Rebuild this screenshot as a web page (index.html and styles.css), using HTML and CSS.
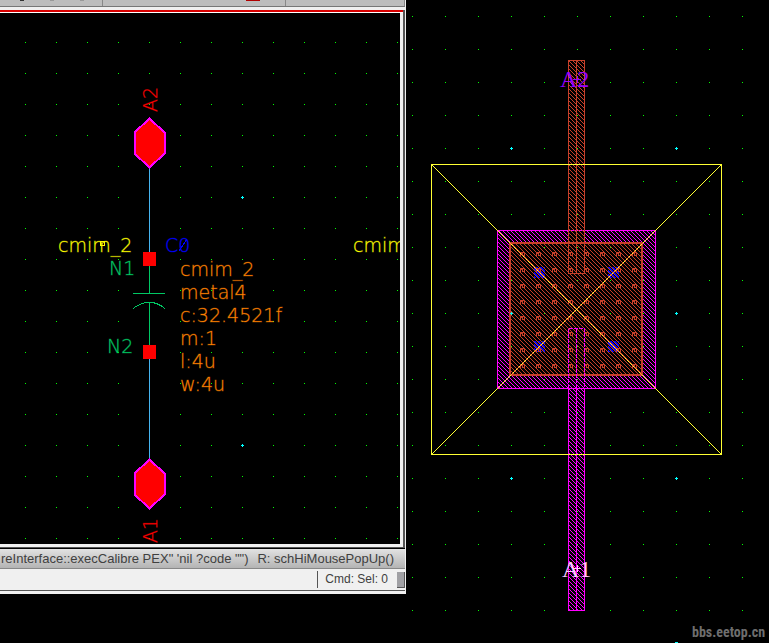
FILE: index.html
```
<!DOCTYPE html>
<html lang="en">
<head>
    <meta charset="UTF-8">
    <meta name="viewport" content="width=device-width, initial-scale=1.0">
    <title>cmim_2 - Schematic and Layout</title>
    <link rel="stylesheet" href="styles.css">
</head>
<body>
    <main class="workspace">
        <section class="schematic-window">
            <div class="toolbar">
                <div class="toolbar-group icons-left"><i class="tick dark"></i><i class="tick"></i><i class="tick"></i></div>
                <div class="toolbar-group icons-mid"><i class="tick red"></i></div>
                <div class="toolbar-group"></div>
            </div>
            <div class="canvas-frame">
                <svg class="schematic" viewBox="0 13 400 531" preserveAspectRatio="xMinYMin meet">
                    <defs>
                        <pattern id="grid31" x="25" y="11" width="31" height="31" patternUnits="userSpaceOnUse">
                            <rect class="grid-dot" width="1" height="1"/>
                        </pattern>
                    </defs>
                    <rect y="13" width="400" height="531" fill="url(#grid31)"/>
                    <path class="grid-major" d="M241 197.500h3M242.500 196v3M241 445.500h3M242.500 444v3"/>

                    <!-- wires and pins -->
                    <path class="wire" d="M149.500 168v85M149.500 359v101"/>
                    <path class="pin" d="M149.500 118.500L164.500 132.500V153.500L149.500 167.500L134.500 153.500V132.500Z"/>
                    <path class="pin" d="M149.500 459.500L164.500 473.500V494.500L149.500 508.500L134.500 494.500V473.500Z"/>
                    <text class="label pin-name" transform="translate(157 112) rotate(-90)">A2</text>
                    <text class="label pin-name" transform="translate(157 543) rotate(-90)">A1</text>

                    <!-- capacitor -->
                    <path class="device" d="M149.500 266v27M133 293.500h32M149.500 302v43M133 308.500Q149.500 296 165 308.500"/>
                    <rect class="terminal" x="143" y="252" width="13" height="14"/>
                    <rect class="terminal" x="143" y="345" width="13" height="14"/>
                    <text class="label net" x="109" y="275">N1</text>
                    <text class="label net" x="107" y="353">N2</text>

                    <text class="label cell" x="58" y="252">cmim_2</text>
                    <rect class="origin" x="100.500" y="241.500" width="4" height="4"/>
                    <text class="label cell" x="353" y="252">cmim</text>
                    <text class="label instance" x="165" y="252">C0</text>
                    <path class="zero-slash" d="M179 251L187 239"/>

                    <g class="label property">
                        <text x="180" y="276">cmim_2</text>
                        <text x="180" y="299">metal4</text>
                        <text x="180" y="322">c:32.4521f</text>
                        <text x="180" y="345">m:1</text>
                        <text x="180" y="368">l:4u</text>
                        <text x="180" y="391">w:4u</text>
                    </g>
                </svg>
            </div>
            <div class="mouse-bar">
                <span>reInterface::execCalibre PEX" 'nil ?code "")</span>
                <span>R: schHiMousePopUp()</span>
            </div>
            <div class="command-bar">
                <input class="command-input" type="text" aria-label="Command">
                <span class="command-status">Cmd: Sel: 0</span>
                <i class="grip"></i>
            </div>
        </section>

        <section class="layout-view">
            <svg class="layout" viewBox="406 0 363 643" preserveAspectRatio="xMinYMin meet">
                <defs>
                    <pattern id="grid33" x="412" y="16" width="33" height="33" patternUnits="userSpaceOnUse">
                        <rect class="grid-dot" width="1" height="1"/>
                    </pattern>
                    <pattern id="hatchMagenta" width="4" height="4" patternUnits="userSpaceOnUse">
                        <path fill="#ff00ff" d="M0 0h1v1h-1zM1 1h1v1h-1zM2 2h1v1h-1zM3 3h1v1h-1z"/>
                    </pattern>
                    <pattern id="hatchMetal" width="4" height="4" patternUnits="userSpaceOnUse">
                        <path fill="#c8402a" d="M0 0h1v1h-1zM1 1h1v1h-1zM2 2h1v1h-1zM3 3h1v1h-1z"/>
                    </pattern>
                    <pattern id="hatchBlue" width="4" height="4" patternUnits="userSpaceOnUse">
                        <path fill="#0000ff" d="M1 0h2v1h-2zM2 1h2v1h-2zM0 2h1v1h-1zM3 2h1v1h-1zM0 3h2v1h-2z"/>
                    </pattern>
                    <pattern id="vias" x="520" y="252" width="16" height="16" patternUnits="userSpaceOnUse">
                        <path fill="#c8402a" d="M1 0h4v5h-1v-4h-1v3h-1v-3h-1v4h-1v-4h1z"/>
                    </pattern>
                </defs>
                <rect x="406" width="363" height="643" fill="url(#grid33)"/>

                <!-- plates -->
                <path fill="url(#hatchMagenta)" fill-rule="evenodd" d="M497 230h159v159h-159zM509 242v134h134v-134z"/>
                <rect class="plate-bottom" x="497.500" y="230.500" width="158" height="158"/>
                <g fill="url(#hatchBlue)">
                    <rect x="534" y="267" width="11" height="11"/>
                    <rect x="608" y="267" width="11" height="11"/>
                    <rect x="534" y="341" width="11" height="11"/>
                    <rect x="608" y="341" width="11" height="11"/>
                </g>
                <rect x="509" y="242" width="134" height="134" fill="url(#hatchMetal)"/>
                <rect x="520" y="252" width="122" height="122" fill="url(#vias)"/>
                <rect class="plate-top" x="510" y="243" width="132" height="132"/>

                <!-- routing -->
                <rect x="568" y="60" width="17" height="213" fill="url(#hatchMetal)"/>
                <path class="route-top" d="M568.500 60.500h16v213h-16zM576.500 60v213"/>
                <rect x="568" y="389" width="17" height="222" fill="url(#hatchMagenta)"/>
                <path class="route-bottom" d="M568.500 388v222.500h16v-222.500M576.500 388v222"/>
                <path class="route-bottom hidden-edge" d="M568.500 388v-59.500h16v59.500M576.500 388v-59"/>

                <!-- cell boundary -->
                <path class="boundary" d="M431.500 164.500h290v290h-290zM432 165L721 454M721 165L432 454"/>
                <path class="boundary-over" d="M510 243L643 376M643 243L510 376"/>
                <path class="grid-major" d="M510 148.500h3M511.500 147v3M675 148.500h3M676.500 147v3M510 313.500h3M511.500 312v3M675 313.500h3M676.500 312v3M510 478.500h3M511.500 477v3M675 478.500h3M676.500 477v3M675 642.500h3"/>

                <text class="pin-text purple" x="560" y="87">A2</text>
                <path class="marker purple" d="M573 79.500h8M577.500 76v7"/>
                <text class="pin-text pink" x="562" y="577">A1</text>
                <path class="marker pink" d="M573 568.500h8M577.500 565v7"/>
                <text class="watermark" x="692" y="637">bbs.eetop.cn</text>
            </svg>
        </section>
    </main>
</body>
</html>
```
FILE: styles.css
```
* {
    margin: 0;
    padding: 0;
    box-sizing: border-box;
}

body {
    background: #000;
    font-family: 'Liberation Sans', Arial, sans-serif;
}

.workspace {
    display: grid;
    grid-template-columns: 406fr 363fr;
    align-items: start;
    min-height: 100vh;
    overflow: hidden;
}

svg {
    display: block;
    width: 100%;
    shape-rendering: crispEdges;
}

/* schematic window */
.schematic-window {
    background: #f0f0f0;
    border-right: 1px solid #f0f0f0;
    border-bottom: 3px solid #f0f0f0;
}

.toolbar {
    display: grid;
    grid-template-columns: 103fr 183fr 119fr;
    height: 7px;
    background: #bdbdbd;
    border-bottom: 1px solid #777;
}

.toolbar-group {
    display: flex;
    border-right: 1px solid #888;
}

.icons-left {
    gap: 26px;
    padding-left: 20px;
}

.icons-mid {
    padding-left: 143px;
}

.tick {
    width: 4px;
    height: 1px;
    background: #999;
}

.tick.dark {
    background: #333;
}

.tick.red {
    width: 14px;
    background: #b00000;
}

.canvas-frame {
    margin-top: 3px;
    padding: 3px 3px 3px 0;
    background: linear-gradient(#d80000 0 2px, #fff 2px 3px, #f0f0f0 3px);
    border-right: 2px solid #555;
    border-bottom: 1px solid #555;
}

.schematic {
    background: #000;
}

.mouse-bar {
    display: flex;
    justify-content: space-between;
    height: 21px;
    padding: 0 11px 0 1px;
    border-top: 1px solid #000;
    border-bottom: 1px solid #888;
    background: linear-gradient(#e2e2e2, #b4b4b4);
    color: #404040;
    font-size: 13px;
    line-height: 20px;
    white-space: nowrap;
}

.command-bar {
    display: flex;
    align-items: center;
    height: 22px;
    border-bottom: 1px solid #555;
    background: #f0f0f0;
    color: #404040;
    font-size: 12px;
}

.command-input {
    flex: 1;
    min-width: 0;
    height: 20px;
    border: none;
    background: transparent;
}

.command-status {
    padding: 0 9px 0 7px;
    border-left: 1px solid #555;
    line-height: 17px;
    white-space: nowrap;
}

.grip {
    width: 8px;
    height: 16px;
    background: #a0a0a4;
    border-right: 1px solid #555;
    border-bottom: 1px solid #555;
}

/* drawing layers */
.grid-dot {
    fill: #00ff00;
}

.grid-major {
    stroke: #00ffff;
}

.wire {
    stroke: #46b4f0;
}

.pin {
    fill: #ff0000;
    stroke: #ff00ff;
    stroke-width: 2;
}

.device {
    fill: none;
    stroke: #00c864;
}

.terminal {
    fill: #ff0000;
}

.origin {
    fill: none;
    stroke: #ffff00;
}

.label {
    font-family: 'DejaVu Sans Light', 'DejaVu Sans', sans-serif;
    font-size: 19px;
    font-weight: 200;
    stroke-opacity: 0.3;
}

.pin-name {
    fill: #ff0000;
    stroke: #ff0000;
}

.net {
    fill: #00c864;
    stroke: #00c864;
}

.cell {
    fill: #ffff00;
    stroke: #ffff00;
}

.instance {
    fill: #0000ff;
    stroke: #0000ff;
}

.zero-slash {
    stroke: #0000ff;
}

.property {
    fill: #ff8000;
    stroke: #ff8000;
}

.plate-bottom,
.route-bottom {
    fill: none;
    stroke: #ff00ff;
}

.hidden-edge {
    stroke-dasharray: 4 1;
}

.plate-top {
    fill: none;
    stroke: #c8402a;
    stroke-width: 2;
}

.route-top {
    fill: none;
    stroke: #c8402a;
}

.boundary {
    fill: none;
    stroke: #ffff33;
}

.boundary-over {
    stroke: #ffa030;
    stroke-dasharray: 2 2;
}

.pin-text {
    font-family: 'Liberation Serif', 'Times New Roman', serif;
    font-size: 24px;
}

.purple {
    fill: #9600ff;
}

.pink {
    fill: #ffc8ff;
}

.marker.purple {
    stroke: #9600ff;
}

.marker.pink {
    stroke: #ffc8ff;
}

.watermark {
    fill: #6e6e6e;
    font-family: 'Liberation Sans Narrow', 'Roboto Condensed', 'Liberation Sans', sans-serif;
    font-size: 14px;
    font-weight: bold;
}
```
